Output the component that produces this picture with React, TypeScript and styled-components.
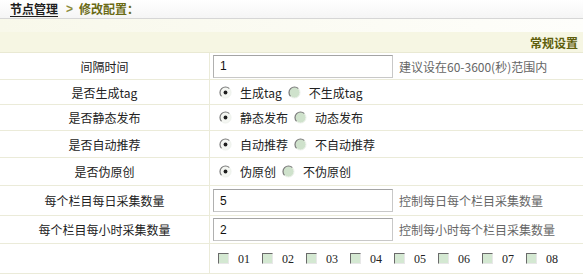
import React from 'react';
import styled, { createGlobalStyle } from 'styled-components';

const GlobalStyle = createGlobalStyle`
    body {
        margin: 0;
        background: #fff;
        font-family: "Noto Sans CJK SC", "Liberation Sans", sans-serif;
        font-size: 12px;
        color: #222;
    }
`;

const Page = styled.div`
    width: 583px;
    height: 275px;
    overflow: hidden;
    background: #fff;
`;

const TitleBar = styled.div`
    height: 18px;
    display: flex;
    align-items: center;
    padding-left: 10px;
    font-weight: bold;
    line-height: 18px;
    background: linear-gradient(#ffffff, #f5f5f5);
    border-bottom: 1px solid #d6d6d6;
`;

const Crumb = styled.a`
    color: #1e1e1e;
    text-decoration: underline;
    text-underline-offset: 2px;
`;

const CrumbSep = styled.span`
    color: #8c8c3c;
    margin: 0 6px 0 8px;
    font-family: "Liberation Sans", sans-serif;
`;

const Current = styled.span`
    color: #6a6a14;
`;

const Spacer = styled.div`
    height: 13px;
    background: linear-gradient(to right, #f8f8ea, #fefefb);
`;

const SectionHead = styled.div`
    height: 20px;
    display: flex;
    align-items: center;
    justify-content: flex-end;
    padding-right: 5px;
    font-weight: bold;
    color: #5e5e0c;
    background: #f6f6e3;
    border-bottom: 1px solid #e9e9d3;
`;

const Row = styled.div<{ $h: number }>`
    display: grid;
    grid-template-columns: 210px 1fr;
    height: ${(p) => p.$h}px;
    border-bottom: 1px solid #ebebd9;
    box-sizing: border-box;
`;

const Label = styled.div`
    display: flex;
    align-items: center;
    justify-content: center;
    border-right: 1px solid #ebebd9;
    color: #222;
`;

const Field = styled.div`
    display: flex;
    align-items: center;
    padding-left: 3px;
`;

const CheckList = styled(Field)`
    padding-left: 8px;
`;

const TextInput = styled.input`
    box-sizing: border-box;
    width: 180px;
    height: 23px;
    padding: 0 6px;
    border: 1px solid #c8c8c8;
    border-top-color: #a4a4a4;
    border-left-color: #b0b0b0;
    font-family: "Liberation Sans", sans-serif;
    font-size: 12px;
    color: #111;
    outline: none;
`;

const Hint = styled.span`
    margin-left: 6px;
    color: #666;
`;

const RadioMark = styled.svg`
    width: 13px;
    height: 13px;
    margin: 0 8px 0 6px;
    flex: none;
`;

const OptText = styled.span`
    color: #222;
`;

const Box = styled.span`
    width: 9px;
    height: 9px;
    flex: none;
    background: #d4e8d2;
    border: 1px solid;
    border-color: #6a6a6a #e8e8e8 #e8e8e8 #6a6a6a;
`;

const BoxText = styled.span`
    flex: none;
    width: 12px;
    margin: 2px 12px 0 9px;
    font-family: "Liberation Serif", serif;
    font-size: 12px;
    color: #222;
`;

const Radio = ({ checked }: { checked?: boolean }) => (
    <RadioMark viewBox="0 0 13 13">
        <circle cx="6.5" cy="6.5" r="5.5" fill={checked ? '#f4f6f2' : '#cfe2cc'} />
        <path d="M2.6 10.4 A5.5 5.5 0 0 1 10.4 2.6" fill="none" stroke="#7a7a7a" strokeWidth="1.2" />
        <path d="M10.4 2.6 A5.5 5.5 0 0 1 2.6 10.4" fill="none" stroke="#eef2ec" strokeWidth="1" />
        {checked && <circle cx="6.5" cy="6.5" r="1.9" fill="#1e1e1e" />}
    </RadioMark>
);

const RadioPair = ({ yes, no }: { yes: string; no: string }) => (
    <>
        <Radio checked />
        <OptText>{yes}</OptText>
        <Radio />
        <OptText>{no}</OptText>
    </>
);

const columns = ['01', '02', '03', '04', '05', '06', '07', '08'];

export default function App() {
    return (
        <Page>
            <GlobalStyle />
            <TitleBar>
                <Crumb>节点管理</Crumb>
                <CrumbSep>&gt;</CrumbSep>
                <Current>修改配置：</Current>
            </TitleBar>
            <Spacer />
            <SectionHead>常规设置</SectionHead>
            <Row $h={27}>
                <Label>间隔时间</Label>
                <Field>
                    <TextInput defaultValue="1" />
                    <Hint>建议设在60-3600(秒)范围内</Hint>
                </Field>
            </Row>
            <Row $h={25}>
                <Label>是否生成tag</Label>
                <Field>
                    <RadioPair yes="生成tag" no="不生成tag" />
                </Field>
            </Row>
            <Row $h={26}>
                <Label>是否静态发布</Label>
                <Field>
                    <RadioPair yes="静态发布" no="动态发布" />
                </Field>
            </Row>
            <Row $h={27}>
                <Label>是否自动推荐</Label>
                <Field>
                    <RadioPair yes="自动推荐" no="不自动推荐" />
                </Field>
            </Row>
            <Row $h={28}>
                <Label>是否伪原创</Label>
                <Field>
                    <RadioPair yes="伪原创" no="不伪原创" />
                </Field>
            </Row>
            <Row $h={30}>
                <Label>每个栏目每日采集数量</Label>
                <Field>
                    <TextInput defaultValue="5" />
                    <Hint>控制每日每个栏目采集数量</Hint>
                </Field>
            </Row>
            <Row $h={28}>
                <Label>每个栏目每小时采集数量</Label>
                <Field>
                    <TextInput defaultValue="2" />
                    <Hint>控制每小时每个栏目采集数量</Hint>
                </Field>
            </Row>
            <Row $h={30}>
                <Label />
                <CheckList>
                    {columns.map((c) => (
                        <React.Fragment key={c}>
                            <Box />
                            <BoxText>{c}</BoxText>
                        </React.Fragment>
                    ))}
                </CheckList>
            </Row>
        </Page>
    );
}
